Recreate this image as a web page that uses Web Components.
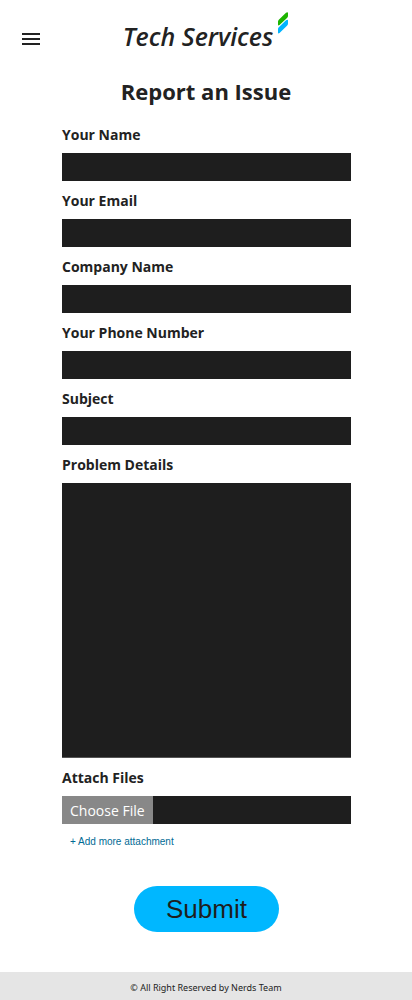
<!DOCTYPE html>
<html lang="en">
<head>
<meta charset="utf-8">
<meta name="viewport" content="width=device-width, initial-scale=1">
<title>Tech Services - Report an Issue</title>
<style>
  body { margin: 0; background: #fff; color: #222; font-family: "Open Sans", "Noto Sans", sans-serif; }
</style>
</head>
<body>
<report-page></report-page>
<script>
const define = (name, html, setup) => {
  const template = document.createElement('template');
  template.innerHTML = html;
  customElements.define(name, class extends HTMLElement {
    constructor() {
      super();
      this.attachShadow({ mode: 'open' }).append(template.content.cloneNode(true));
    }
    connectedCallback() { if (setup) setup(this, this.shadowRoot); }
  });
};

define('brand-logo', `
  <style>
    :host { display: block; }
    a { display: flex; align-items: flex-start; gap: 4px; color: #222; text-decoration: none; }
    span { padding-top: 8px; font: italic 600 25px/32px "Open Sans", sans-serif; white-space: nowrap; }
    svg { display: block; }
  </style>
  <a href="#"><span>Tech Services</span>
    <svg width="12" height="22" viewBox="0 0 12 22" aria-hidden="true">
      <path d="M1 9.600Q1 8.500 1.800 7.700L9 .7Q11-.5 11 1.200V4Q11 5.200 10 6L2.500 13Q1 14.200 1 12.500Z" fill="#1db400"/>
      <path d="M1 17.200Q1 16 1.800 15.300L9 8.300Q11 7 11 8.500V11.500Q11 12.700 10 13.700L2.500 21Q1 22.200 1 20.500Z" fill="#00b4ff"/>
    </svg></a>
`);

define('site-header', `
  <style>
    :host { display: grid; grid-template-columns: 1fr auto 1fr; align-items: start; padding: 12px 22px 0; }
    button { justify-self: start; margin: 0; padding: 21px 0 0; border: 0; background: none; color: #222; cursor: pointer; }
    svg { display: block; }
  </style>
  <button type="button" aria-label="Menu">
    <svg width="18" height="12" viewBox="0 0 18 12" fill="currentColor" aria-hidden="true"><path d="M0 0h18v2H0zM0 5h18v2H0zM0 10h18v2H0z"/></svg>
  </button>
  <brand-logo></brand-logo>
`);

define('form-field', `
  <style>
    :host { display: block; }
    label { display: block; padding-top: 2px; font-size: 14px; line-height: 36px; font-weight: 700; }
    input, textarea { display: block; box-sizing: border-box; width: 100%; height: 28px; margin: 0; padding: 4px 8px;
      border: 0; border-radius: 0; background: #1e1e1e; color: #fff; font: inherit; font-size: 14px; resize: none; }
    textarea { height: 275px; border-bottom: 1px solid #555; }
  </style>
  <label for="control"><slot></slot></label>
`, (host, root) => {
  if (root.getElementById('control')) return;
  const type = host.getAttribute('type') || 'text';
  const control = document.createElement(type === 'textarea' ? 'textarea' : 'input');
  if (type !== 'textarea') control.type = type;
  control.id = 'control';
  root.append(control);
});

define('file-field', `
  <style>
    :host { display: block; }
    .title { display: block; padding-top: 2px; font-size: 14px; line-height: 36px; font-weight: 700; }
    .box { display: flex; position: relative; background: #1e1e1e; }
    .choose { padding: 2px 8px 0; background: #888; color: #fff; font-size: 14px; line-height: 26px; cursor: pointer; }
    input { position: absolute; inset: 0; width: 100%; opacity: 0; cursor: pointer; }
    a { display: inline-block; margin-left: 8px; color: #006a94; font: 10px/36px "Liberation Sans", sans-serif; text-decoration: none; }
  </style>
  <label class="title" for="file">Attach Files</label>
  <div class="box"><label class="choose" for="file">Choose File</label><input id="file" type="file"></div>
  <a href="#">+ Add more attachment</a>
`);

define('submit-button', `
  <style>
    :host { display: flex; justify-content: center; }
    button { padding: 0 32px; border: 0; border-radius: 23px; background: #00b7ff; color: #1e1e1e;
      font: 26px/46px "Liberation Sans", sans-serif; cursor: pointer; }
  </style>
  <button type="submit"><slot></slot></button>
`);

define('site-footer', `
  <style>
    :host { display: block; background: #e5e5e5; text-align: center; font: 9px/24px "Noto Sans", sans-serif; }
    p { margin: 0; padding-top: 4px; }
  </style>
  <p><slot></slot></p>
`);

define('report-page', `
  <style>
    :host { display: flex; flex-direction: column; min-height: 100vh; }
    main { flex: 1; }
    h1 { margin: 21px 0 6px; text-align: center; font-size: 22px; line-height: 36px; font-weight: 700; }
    form { padding: 0 61px 0 62px; }
    submit-button { margin: 26px 0 40px; }
  </style>
  <site-header></site-header>
  <main>
    <h1>Report an Issue</h1>
    <form>
      <form-field>Your Name</form-field>
      <form-field type="email">Your Email</form-field>
      <form-field>Company Name</form-field>
      <form-field type="tel">Your Phone Number</form-field>
      <form-field>Subject</form-field>
      <form-field type="textarea">Problem Details</form-field>
      <file-field></file-field>
      <submit-button>Submit</submit-button>
    </form>
  </main>
  <site-footer>© All Right Reserved by Nerds Team</site-footer>
`);
</script>
</body>
</html>
